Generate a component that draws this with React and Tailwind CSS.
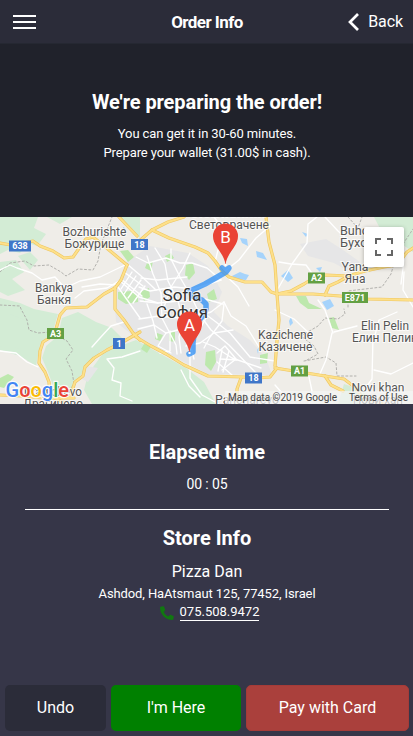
import React from "react";

const GREENS = [
  "M0 217H38L34 228L46 234L37 246L28 243L20 253L8 250L0 254Z",
  "M0 262L16 260L24 272L12 279L25 290L8 296L0 292Z",
  "M18 256L30 252L38 260L30 270Z",
  "M47 217H72L60 224Z",
  "M0 298L20 303L34 309L58 314L52 334L40 345L36 366L20 356L0 350Z",
  "M62 318L78 312L96 322L112 328L124 340L100 352L84 370L72 390L54 388L48 372L42 358L46 346L58 336Z",
  "M88 374L104 352L136 340L166 357L186 368L204 382L216 404H92L84 390Z",
  "M120 217H140V238L128 228Z",
  "M374 217H413V252L396 240L384 236Z",
  "M344 384L362 390L372 404H338Z",
  "M0 322L10 314L30 322L34 350L0 346Z",
];
const BRIGHT_GREENS = [
  "M118 292L132 291L138 296V302L126 304L118 299Z",
  "M206 352L215 350L216 362L211 371L205 365Z",
  "M186 265L193 263L195 273L189 280L185 275Z",
  "M169 331L175 332L175 342L169 341Z",
  "M147 263L153 261L151 271L145 268Z",
  "M140 292L149 288L150 297L144 301Z",
  "M144 344L152 345L147 353L141 349Z",
  "M157 333L163 335L160 341L155 339Z",
  "M165 256L171 253L174 258L167 262Z",
  "M329 318L334 317L339 330L332 328Z",
  "M0 378L8 374L14 377L4 388L0 387Z",
  "M296 296L306 296L309 303L322 309H308L300 303Z",
  "M260 355L268 353L267 363L260 364Z",
  "M207 294L214 289L217 299L209 302Z",
  "M120 251L128 250L134 257L128 262Z",
];
const URBAN = [
  "M126 262L150 246L188 253L208 266L222 292L214 312L228 326L250 340L266 358L272 375L208 374L166 353L136 338L116 322L114 292Z",
  "M300 244L326 239L343 250L360 262L350 272L334 263L308 256Z",
  "M86 366L98 368L88 382L80 378Z",
];
const WATER = [
  "M240 238L247 239L248 246L242 243Z",
  "M256 251L263 253L267 260L257 257Z",
  "M232 276L240 272L245 274L249 275L246 280L235 279Z",
  "M281 276L288 270L293 278L288 282Z",
  "M322 302L330 299L334 306L327 310Z",
  "M302 232L308 234L306 237Z",
  "M316 268L322 267L320 272Z",
  "M289 321L291 317L293 323L290 326Z",
  "M257 350L259 347L258 354Z",
  "M123 227L125 228L126 233L123 231Z",
];
const STREETS = [
  "M0 270L10 265L17 268L32 273L42 280L55 277L65 288L80 281L100 277L127 264",
  "M75 298L84 291L107 288L119 281", "M82 287L100 284L116 285",
  "M0 351L16 353L27 362L38 367", "M92 347L100 338L111 326L124 322",
  "M140 351L122 357L107 359L114 368L112 380L121 383L120 396L132 401",
  "M127 264L140 275L156 290", "M120 281L139 297L158 303", "M118 287L140 318",
  "M132 272L121 289", "M136 276L124 294", "M141 280L128 298", "M145 286L133 303",
  "M124 272L143 286", "M121 279L142 296",
  "M136 257L148 263L166 258L180 263L192 263L207 268L221 280",
  "M147 256L153 274L161 293", "M155 248L165 264L168 281L178 301",
  "M171 249L171 259L181 279L192 298", "M190 253L183 268L171 287L164 307",
  "M139 287L150 291L174 287L194 289L221 280", "M141 278L158 280L187 277",
  "M140 301L158 303L179 301L205 299L223 304", "M139 319L159 316L190 319L211 312L224 302",
  "M147 304L153 321L157 338", "M161 293L162 318L176 345L177 354",
  "M178 301L183 320L179 337L181 353", "M192 298L200 315L211 330L229 345L257 374",
  "M200 310L216 322L230 333L250 357L275 361", "M206 318L198 333L190 343L194 359",
  "M224 304L222 321L210 337L204 348", "M138 329L154 325L166 333L178 330",
  "M166 333L158 346L171 353", "M203 342L215 347L232 358L261 368",
  "M224 302L231 316L246 326L259 347", "M217 353L225 346L236 359L222 370",
  "M220 359L237 360", "M217 362L232 375", "M222 350L218 371", "M229 351L223 372",
  "M170 331L170 351L160 353", "M186 346L200 343L214 333L233 330",
  "M220 275L239 260L256 238L270 226", "M225 275L238 287L249 306",
  "M215 262L218 250L225 239L232 222", "M214 217L224 230",
  "M190 354L190 378L202 395L219 404", "M181 370L189 386L200 397",
  "M275 294L292 264L307 243L308 224L317 217", "M279 262L291 264L306 265L314 276",
  "M325 217L338 231L352 244", "M333 333L325 310L318 300", "M332 333L326 360L319 376",
  "M334 332L357 326", "M375 335L379 320L397 312", "M373 337L372 379L362 393",
  "M374 370L391 374L413 363", "M404 272L403 290L413 307", "M404 260L401 284",
  "M275 310L294 319L309 333", "M309 377L312 391L309 404", "M275 385L289 401",
];
const ROADS = [
  "M0 243L11 245L24 243L33 241L40 246L53 251L64 258L73 257L80 247L86 239L93 237L103 245L115 255L127 265",
  "M119 217L137 236", "M138 242L152 230L168 222L184 217",
  "M152 230L169 238L195 247L208 253L215 261L222 271L229 277L245 282L262 282L271 292L277 294L291 291L304 284L315 277L326 275L348 276L365 271L384 267L397 265L407 252L413 248",
  "M127 265L121 280L115 288L104 294L87 307L66 308L60 315L56 329L51 337L43 342L40 351L39 363L45 372L49 382L50 395L62 402",
  "M115 287L115 309L124 320L133 333L140 340",
  "M140 332L121 343L107 350L94 358L85 367L83 376L75 382L70 397",
  "M0 395L22 396L43 398L74 398",
  "M136 337L151 346L166 354L184 365L208 376L243 377L258 378L270 377L277 368",
  "M266 217L269 242L275 265L277 294L279 320L277 341L275 366",
  "M277 294L313 294L340 296L368 299L413 300", "M325 295L329 286L338 282L347 277",
  "M241 378L237 389L237 404", "M275 368L300 372L325 376L344 379L356 388L363 399L382 404",
  "M325 376L331 385L343 391",
];
const BORDERS = [
  "M0 272L10 263L25 261L34 266L49 265L61 272L66 276L78 269L93 270L98 261L101 244L106 232L112 217",
  "M0 305L20 306L21 309L27 320L29 330L38 333L51 332L67 341L73 350L66 359L72 371L74 384L65 397",
  "M307 360L318 354L314 346L301 336L318 326L325 318L338 319L345 314L344 309",
  "M304 361L326 357L336 363L337 376L356 376", "M348 217L358 228L362 217",
  "M348 307L348 291L382 287L391 274L397 253L413 229",
];
const SHIELDS = [
  { x: 9, y: 240.5, w: 22, t: "638", c: "#3f76c8" }, { x: 131, y: 239, w: 17, t: "18", c: "#3f76c8" },
  { x: 47, y: 328, w: 17, t: "A3", c: "#63a043" }, { x: 113, y: 338, w: 12, t: "1", c: "#3f76c8" },
  { x: 308, y: 272.5, w: 17, t: "A2", c: "#63a043" }, { x: 342, y: 292, w: 26, t: "E871", c: "#63a043" },
  { x: 245, y: 372.5, w: 17, t: "18", c: "#3f76c8" }, { x: 291, y: 365.5, w: 17, t: "A1", c: "#63a043" },
];
const PLACES = [
  { x: 94.5, y: 236, w: 64, t: "Bozhurishte" }, { x: 94.5, y: 248, w: 60, t: "Божурище" },
  { x: 54, y: 292, w: 38, t: "Bankya" }, { x: 54, y: 304, w: 34, t: "Банкя" },
  { x: 229, y: 217, w: 76, t: "Svetovrachene" }, { x: 229, y: 229, w: 80, t: "Световрачене" },
  { x: 361, y: 235, w: 42, t: "Buhovo" }, { x: 361, y: 247, w: 42, t: "Бухово" },
  { x: 355, y: 271, w: 27, t: "Yana" }, { x: 355, y: 283, w: 21, t: "Яна" },
  { x: 285.5, y: 339, w: 55, t: "Kazichene" }, { x: 285.5, y: 351, w: 54, t: "Казичене" },
  { x: 385, y: 329.5, w: 48, t: "Elin Pelin" }, { x: 385, y: 341.5, w: 66, t: "Елин Пелин" },
  { x: 378, y: 392, w: 53, t: "Novi khan" }, { x: 378, y: 404, w: 50, t: "Нови хан" },
  { x: 53, y: 396, w: 58, t: "Dragichevo" }, { x: 53, y: 408, w: 60, t: "Драгичево" },
  { x: 247, y: 404, w: 64, t: "Pancharevo" },
];

function Pin({ x, y, letter }) {
  return (
    <g transform={`translate(${x} ${y})`}>
      <path d="M0 0C-1.5-13-12.5-18-12.5-29A12.5 12.5 0 0 1 12.5-29C12.5-18 1.5-13 0 0Z" fill="#ea4335" />
      <text y="-22" textAnchor="middle" fontSize="17" fill="#fff">{letter}</text>
    </g>
  );
}

function Lines({ items, ...props }) {
  return (
    <g fill="none" strokeLinejoin="round" strokeLinecap="round" {...props}>
      {items.map((d) => <path key={d} d={d} />)}
    </g>
  );
}

function Shapes({ items, fill }) {
  return <g fill={fill}>{items.map((d) => <path key={d} d={d} />)}</g>;
}

function RouteMap() {
  return (
    <div className="relative h-[187px] w-full shrink-0 overflow-hidden bg-[#efede8]">
      <svg className="block h-[187px] w-[414px]" viewBox="0 217 414 187" fontFamily="Roboto, sans-serif">
        <rect y="217" width="414" height="187" fill="#efede8" />
        <Shapes items={GREENS} fill="#d3ecd5" />
        <Shapes items={URBAN} fill="#e6e6e7" />
        <Shapes items={BRIGHT_GREENS} fill="#bde8ad" />
        <Shapes items={WATER} fill="#a5d3fb" />
        <Lines items={BORDERS} stroke="#aaa9a6" strokeWidth="0.9" strokeDasharray="2 2.3" />
        <Lines items={STREETS} stroke="#fff" strokeWidth="1.35" />
        <Lines items={ROADS} stroke="#efc660" strokeWidth="3.2" />
        <Lines items={ROADS} stroke="#fde08a" strokeWidth="2" />
        <g fontSize="9" fontWeight="700" fill="#fff" textAnchor="middle">
          {SHIELDS.map((s) => (
            <g key={`${s.t}-${s.x}`}>
              <rect x={s.x} y={s.y} width={s.w} height="11" fill={s.c} />
              <text x={s.x + s.w / 2} y={s.y + 8.7}>{s.t}</text>
            </g>
          ))}
        </g>
        <g fontSize="12" fill="#555" stroke="#fff" strokeWidth="2" strokeOpacity="0.7" paintOrder="stroke" textAnchor="middle">
          {PLACES.map((p) => <text key={p.t} x={p.x} y={p.y} textLength={p.w} lengthAdjust="spacingAndGlyphs">{p.t}</text>)}
        </g>
        <g fill="none" stroke="#3793f5" strokeOpacity="0.8" strokeLinejoin="round" strokeLinecap="round">
          <path d="M222 268L225 271L229 268L226 272L219 276L205 284L190 291L192 296L202 300L206 304L206 309L203 316L196 323L193 342L193 352L189 354" strokeWidth="5.5" />
        </g>
        <g fontSize="17" fill="#333" stroke="#fff" strokeWidth="2" strokeOpacity="0.7" paintOrder="stroke" textAnchor="middle">
          <text x="182" y="300.5" textLength="39" lengthAdjust="spacingAndGlyphs">Sofia</text>
          <text x="182" y="317.5" textLength="52" lengthAdjust="spacingAndGlyphs">София</text>
        </g>
        <Pin x={225.5} y={265} letter="B" />
        <Pin x={189.5} y={353} letter="A" />
        <path d="M225.5 264v2M189.5 352v2" stroke="#fff" strokeWidth="2" />
        <rect x="225" y="391" width="189" height="13" fill="#f5f5f5" fillOpacity="0.7" />
        <g fontSize="10" fill="#444">
          <text x="228" y="400.5" textLength="109" lengthAdjust="spacingAndGlyphs">Map data ©2019 Google</text>
          <text x="349" y="400.5" textLength="59" lengthAdjust="spacingAndGlyphs">Terms of Use</text>
        </g>
        <text x="5.5" y="396.5" fontSize="20.5" fontWeight="500" textLength="63.500" lengthAdjust="spacingAndGlyphs" stroke="#fff" strokeWidth="2.4" strokeOpacity="0.85" paintOrder="stroke">
          <tspan fill="#4285f4">G</tspan><tspan fill="#ea4335">o</tspan><tspan fill="#fbbc05">o</tspan><tspan fill="#4285f4">g</tspan><tspan fill="#34a853">l</tspan><tspan fill="#ea4335">e</tspan>
        </text>
      </svg>
      <button aria-label="Fullscreen" className="absolute right-[10px] top-[10px] flex size-10 items-center justify-center rounded-[2px] bg-white shadow-[0_1px_4px_rgba(0,0,0,0.3)]">
        <svg viewBox="0 0 18 18" className="size-[18px]" fill="#666">
          <path d="M0 0H6V2H2V6H0ZM12 0H18V6H16V2H12ZM0 12H2V16H6V18H0ZM16 12H18V18H12V16H16Z" />
        </svg>
      </button>
    </div>
  );
}

export default function App() {
  return (
    <div className="w-[413px] overflow-hidden">
      <div className="flex h-[736px] w-[414px] flex-col overflow-hidden bg-[#363648] font-['Roboto',sans-serif] text-white">
        <header className="grid h-11 shrink-0 grid-cols-3 items-center border-b border-[#252832] bg-[#2b2c39] px-[10px]">
          <button aria-label="Menu" className="ml-[3px] flex w-[23px] flex-col gap-1">
            <span className="h-0.5 bg-white" />
            <span className="h-0.5 bg-white" />
            <span className="h-0.5 bg-white" />
          </button>
          <h1 className="text-center text-[17px] font-bold leading-6 tracking-[-0.55px]">Order Info</h1>
          <button className="flex items-center justify-end gap-[9px] pr-px text-base tracking-[-0.1px]">
            <svg viewBox="0 0 11 18" className="h-[18px] w-[11px]" fill="none" stroke="currentColor" strokeWidth="2.7">
              <path d="M10 1L2 9L10 17" />
            </svg>
            Back
          </button>
        </header>
        <section className="flex h-[173px] shrink-0 flex-col items-center bg-[#20222b] pt-[44px] text-center">
          <h2 className="text-xl font-bold leading-[28px] tracking-[-0.08px]">We're preparing the order!</h2>
          <p className="mt-2 text-[13px] leading-[19px] tracking-[-0.1px]">You can get it in 30-60 minutes.<br />Prepare your wallet (31.00$ in cash).</p>
        </section>
        <RouteMap />
        <main className="flex flex-1 flex-col items-center px-[25px] pt-[34px] text-center">
          <h2 className="text-xl font-bold leading-7">Elapsed time</h2>
          <p className="mt-2 text-sm leading-5 tracking-[-0.1px]">00 : 05</p>
          <hr className="mt-[15px] w-full border-white" />
          <h2 className="mt-[14px] text-xl font-bold leading-7">Store Info</h2>
          <p className="mt-2 text-base leading-6">Pizza Dan</p>
          <p className="text-[13px] leading-5 tracking-[-0.1px]">Ashdod, HaAtsmaut 125, 77452, Israel</p>
          <p className="flex items-center gap-1.5 pl-[5px] text-[13px]">
            <svg viewBox="0 0 512 512" className="size-[14px] -scale-x-100 fill-[#117711]">
              <path d="M402 8L494 29C505 32 512 41 512 52C512 306 306 512 52 512C41 512 32 505 29 494L8 394C6 383 11 372 21 368L129 322C138 318 149 321 155 328L203 386C278 351 339 290 374 215L327 167C320 161 317 150 321 141L367 22C372 11 384 5 402 8Z" />
            </svg>
            <a className="border-b border-white leading-[16px]">075.508.9472</a>
          </p>
        </main>
        <footer className="flex h-[51px] shrink-0 gap-[5px] px-[5px] pb-[5px] text-base">
          <button className="w-[101px] rounded-[5px] bg-[#2b2c39]">Undo</button>
          <button className="w-[130px] rounded-[5px] bg-[#008000]">I'm Here</button>
          <button className="w-[163px] rounded-[5px] border border-[#a53b38] bg-[#aa403c]">Pay with Card</button>
        </footer>
      </div>
    </div>
  );
}
